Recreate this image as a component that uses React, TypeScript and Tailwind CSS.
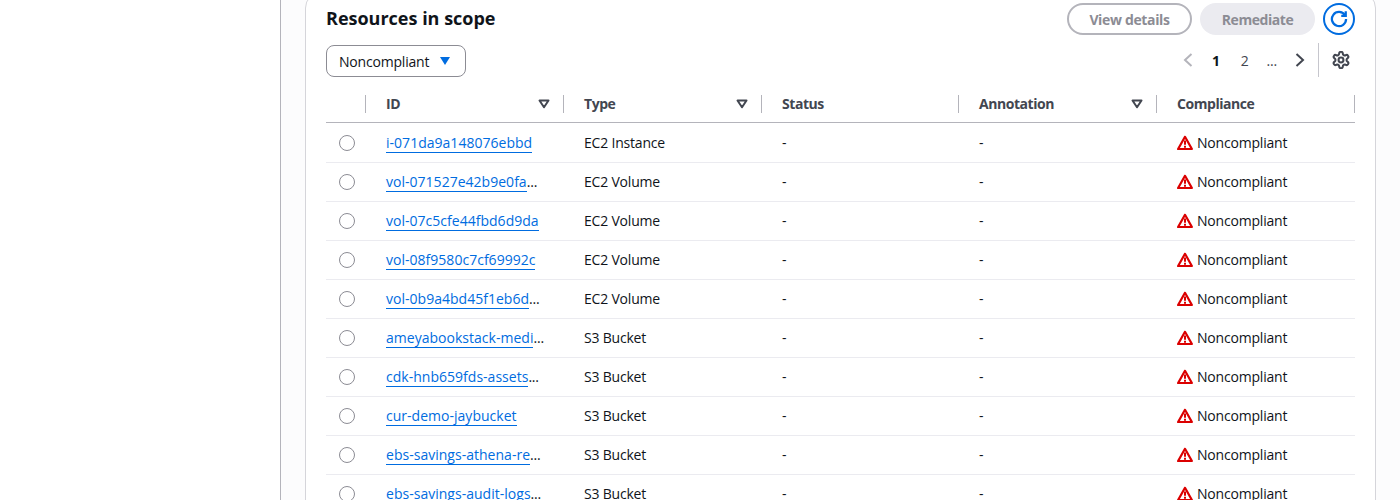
import React from "react";

const ids: [string, string, boolean][] = [
  ["i-071da9a148076ebbd", "EC2 Instance", false],
  ["vol-071527e42b9e0fa", "EC2 Volume", true],
  ["vol-07c5cfe44fbd6d9da", "EC2 Volume", false],
  ["vol-08f9580c7cf69992c", "EC2 Volume", false],
  ["vol-0b9a4bd45f1eb6d", "EC2 Volume", true],
  ["ameyabookstack-medi", "S3 Bucket", true],
  ["cdk-hnb659fds-assets", "S3 Bucket", true],
  ["cur-demo-jaybucket", "S3 Bucket", false],
  ["ebs-savings-athena-re", "S3 Bucket", true],
  ["ebs-savings-audit-logs", "S3 Bucket", true],
];

const SortIcon = () => (
  <svg width="12" height="10" viewBox="0 0 12 10" className="shrink-0">
    <path d="M1.5 1.5h9L6 8.2z" fill="none" stroke="#424650" strokeWidth="2" strokeLinejoin="round" />
  </svg>
);

const Warn = () => (
  <svg width="16" height="16" viewBox="0 0 16 16" className="shrink-0 -mt-[1px]">
    <path d="M8 1.8 1.1 14h13.8z" fill="none" stroke="#db0000" strokeWidth="2.2" strokeLinejoin="round" />
    <path d="M8 5.6v4.2M8 10.8v1.9" fill="none" stroke="#db0000" strokeWidth="2" />
  </svg>
);

const Head = ({ label, sort, w }: { label: string; sort?: boolean; w: string }) => (
  <div className={`${w} h-[18px] flex items-center justify-between pl-[20px] pr-[13px] border-r border-[#b4b4bb] text-[#424650] font-bold tracking-[-0.45px]`}>
    <span>{label}</span>
    {sort && <SortIcon />}
  </div>
);

export default function App() {
  return (
    <div className="h-[500px] w-[1400px] overflow-hidden flex bg-white text-[14px] text-[#0f141a] font-['Open_Sans','Noto_Sans',sans-serif] tracking-[-0.2px]">
      <div className="w-[281px] shrink-0 border-r border-[#b4b4bb]" />
      <div className="w-[1119px] bg-[#fcfcfd] pl-[24px] pr-[24px]">
        <div className="-mt-[8px] w-[1071px] h-[600px] border border-[#d5d5da] rounded-[16px] bg-white pl-[20px] pr-[20px] pt-[10px]">
          <div className="flex items-center justify-between h-[32px]">
            <div className="text-[18px] font-bold tracking-[0px] leading-[22px] -mt-[2px]">Resources in scope</div>
            <div className="flex items-center gap-[8px]">
              <div className="w-[125px] h-[32px] rounded-full border-2 border-[#b4b4bb] flex items-center justify-center font-bold text-[#8c8c94] tracking-[-0.35px]">View details</div>
              <div className="w-[115px] h-[32px] rounded-full bg-[#ebebf0] flex items-center justify-center font-bold text-[#8c8c94] tracking-[-0.45px]">Remediate</div>
              <div className="w-[32px] h-[32px] rounded-full border-2 border-[#006ce0] flex items-center justify-center">
                <svg width="18" height="18" viewBox="0 0 16 16" fill="none" stroke="#006ce0" strokeWidth="2">
                  <path d="M13.2 4.5A6.3 6.3 0 1 0 14.3 8" />
                  <path d="M10 5.2h4V1.2" />
                </svg>
              </div>
            </div>
          </div>
          <div className="flex items-start justify-between mt-[10px] h-[34px]">
            <div className="w-[140px] h-[32px] rounded-[8px] border border-[#8c8c94] flex items-center justify-between pl-[12px] pr-[14px]">
              <span>Noncompliant</span>
              <svg width="12" height="10" viewBox="0 0 12 10"><path d="M1 1h10L6 9z" fill="#006ce0" /></svg>
            </div>
            <div className="flex items-center h-[34px] -mt-[2px] pr-[5px]">
              <svg width="12" height="16" viewBox="0 0 12 16" fill="none" stroke="#b4b4bb" strokeWidth="2"><path d="M9.5 2 3 8l6.5 6" /></svg>
              <span className="ml-[18px] font-bold">1</span>
              <span className="ml-[21px] text-[#424650]">2</span>
              <span className="ml-[18px] text-[#424650]">...</span>
              <svg className="ml-[17px]" width="12" height="16" viewBox="0 0 12 16" fill="none" stroke="#424650" strokeWidth="2"><path d="M2.5 2 9 8l-6.5 6" /></svg>
              <div className="w-px h-[34px] bg-[#c6c6cd] ml-[12px]" />
              <svg className="ml-[13px]" width="18" height="18" viewBox="1 1 22 22" fill="none" stroke="#424650" strokeWidth="2.5" strokeLinejoin="round">
                <path d="M12.2 2h-.4a2 2 0 0 0-2 2v.2a2 2 0 0 1-1 1.7l-.4.3a2 2 0 0 1-2 0l-.2-.1a2 2 0 0 0-2.7.7l-.2.4a2 2 0 0 0 .7 2.7l.2.1a2 2 0 0 1 1 1.7v.5a2 2 0 0 1-1 1.8l-.2.1a2 2 0 0 0-.7 2.7l.2.4a2 2 0 0 0 2.7.7l.2-.1a2 2 0 0 1 2 0l.4.3a2 2 0 0 1 1 1.7v.2a2 2 0 0 0 2 2h.4a2 2 0 0 0 2-2v-.2a2 2 0 0 1 1-1.7l.4-.3a2 2 0 0 1 2 0l.2.1a2 2 0 0 0 2.7-.7l.2-.4a2 2 0 0 0-.7-2.7l-.2-.1a2 2 0 0 1-1-1.8v-.5a2 2 0 0 1 1-1.7l.2-.1a2 2 0 0 0 .7-2.7l-.2-.4a2 2 0 0 0-2.7-.7l-.2.1a2 2 0 0 1-2 0l-.4-.3a2 2 0 0 1-1-1.7V4a2 2 0 0 0-2-2z" />
                <circle cx="12" cy="12" r="3" />
              </svg>
            </div>
          </div>
          <div className="flex items-center h-[37px] mt-[7px] border-b border-[#b4b4bb] w-[1029px] pb-[1px]">
            <div className="w-[40px] h-[18px] border-r border-[#b4b4bb]" />
            <Head label="ID" sort w="w-[198px]" />
            <Head label="Type" sort w="w-[198px]" />
            <Head label="Status" w="w-[197px]" />
            <Head label="Annotation" sort w="w-[198px]" />
            <Head label="Compliance" w="w-[198px]" />
          </div>
          {ids.map(([id, type, cut], i) => (
            <div key={id} className={`flex items-center leading-[20px] ${i === 0 ? "h-[40px] pt-[1px]" : "h-[39px]"} border-b border-[#ebebf0] w-[1029px]`}>
              <div className="w-[40px] flex justify-center pl-[2px]">
                <div className="w-[16px] h-[16px] rounded-full border border-[#8c8c94]" />
              </div>
              <div className="w-[198px] pl-[20px] flex items-center whitespace-nowrap">
                <span className="text-[#006ce0] border-b border-[#006ce0] leading-[19px] tracking-[0.02px]">{id}</span>
                {cut && <span>...</span>}
              </div>
              <div className="w-[198px] pl-[20px]">{type}</div>
              <div className="w-[197px] pl-[20px]">-</div>
              <div className="w-[198px] pl-[20px]">-</div>
              <div className="w-[198px] pl-[20px] flex items-center gap-[4px]"><Warn /><span>Noncompliant</span></div>
            </div>
          ))}
        </div>
      </div>
    </div>
  );
}
